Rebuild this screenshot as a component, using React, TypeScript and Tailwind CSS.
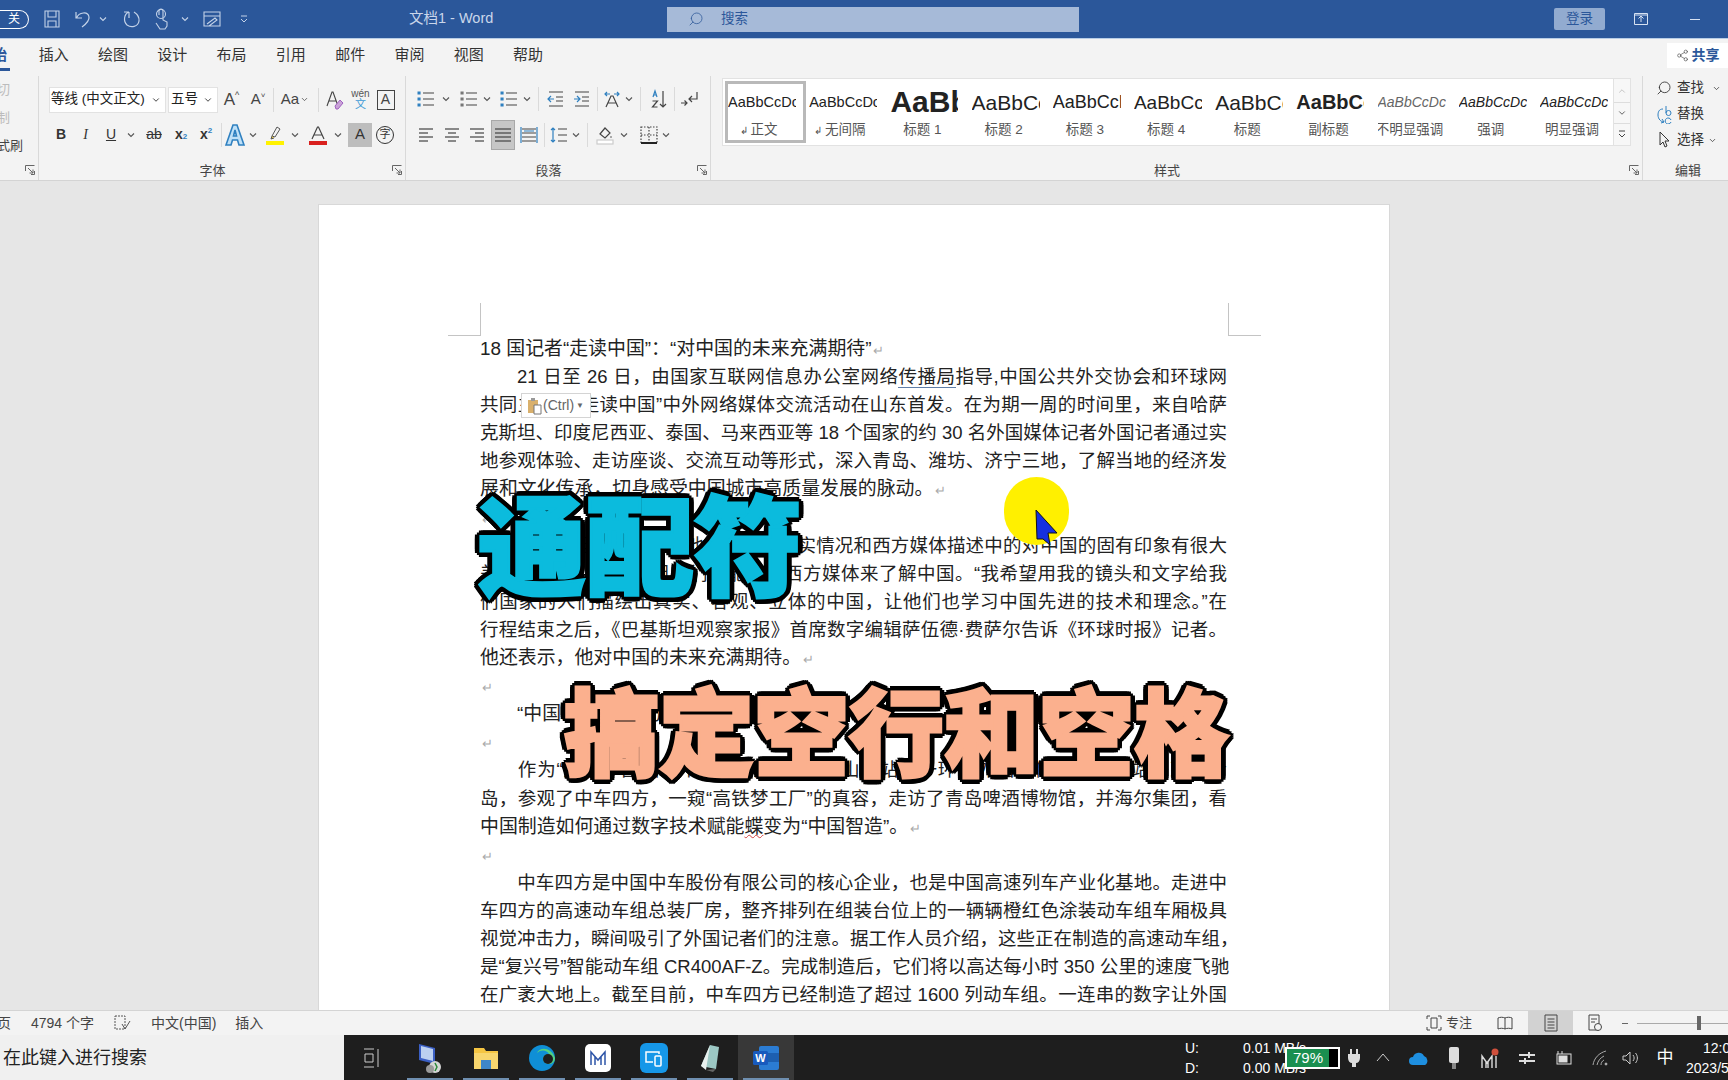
import React from "react";
import { Search, ChevronDown, ChevronUp, Share2 } from "lucide-react";

type P = { c?: string; children?: React.ReactNode };
const Cell = ({ c = "", children }: P) => <div className={`flex items-center justify-center shrink-0 ${c}`}>{children}</div>;
const Sep = ({ c = "" }: P) => <div className={`flex items-center justify-center shrink-0 ${c}`}><div className="w-px h-[24px] bg-[#dadada]" /></div>;
const Chev = ({ c = "" }: P) => <Cell c={c}><svg width="8" height="6" viewBox="0 0 8 6"><path d="M1 1.5 4 4.5 7 1.5" fill="none" stroke="#555" strokeWidth="1.1" /></svg></Cell>;

const S = ({ children, w = 20, h = 20 }: { children: React.ReactNode; w?: number; h?: number }) => (
  <svg width={w} height={h} viewBox="0 0 20 20" fill="none" stroke="#444" strokeWidth="1.2">{children}</svg>
);
const Lines = ({ kind }: { kind: "l" | "c" | "r" | "j" }) => {
  const rows = kind === "j" ? [[2, 18], [2, 18], [2, 18], [2, 18]] : kind === "l" ? [[3, 17], [3, 12], [3, 17], [3, 12]] : kind === "c" ? [[3, 17], [6, 14], [3, 17], [6, 14]] : [[3, 17], [8, 17], [3, 17], [8, 17]];
  return <S>{rows.map((r, i) => <path key={i} d={`M${r[0]} ${4 + i * 4}H${r[1]}`} />)}</S>;
};
const ListI = ({ color = "#2f80c0" }: { color?: string }) => (
  <S><path d="M7 4H18M7 10H18M7 16H18" /><path d="M3 4h.1M3 10h.1M3 16h.1" stroke={color} strokeWidth="3" strokeLinecap="square" /></S>
);
const Launcher = () => (
  <svg width="10" height="10" viewBox="0 0 10 10" fill="none" stroke="#666"><path d="M.5 6V.5H9.5" /><path d="M3 3 8 8M8 4.5V8H4.5" /><path d="M9.5 6V9.5H6" /></svg>
);
const Group = ({ c = "", label, launcher, children }: P & { label: string; launcher?: boolean }) => (
  <div className={`flex flex-col shrink-0 h-full border-r border-[#d9d9d9] ${c}`}>
    <div className="flex-1 min-h-0">{children}</div>
    <div className="h-[22px] flex items-center text-[13px] text-[#444] shrink-0 pt-[3px]">
      <div className="flex-1" /><span className="ml-[-16px]">{label}</span>
      <div className="flex-1 flex justify-end pr-[3px] pb-[2px]">{launcher && <Launcher />}</div>
    </div>
  </div>
);

const Tab = ({ children }: P) => <div className="w-[59.300px] shrink-0 text-center text-[15px] text-[#333]">{children}</div>;

const styles: [string, string, string][] = [
  ["AaBbCcDc", "正文", "text-[14.500px]"],
  ["AaBbCcDc", "无间隔", "text-[14.500px]"],
  ["AaBbCcDc", "标题 1", "text-[30px] font-bold"],
  ["AaBbCcDc", "标题 2", "text-[21px]"],
  ["AaBbCcDc", "标题 3", "text-[18px]"],
  ["AaBbCcDc", "标题 4", "text-[19px]"],
  ["AaBbCcDc", "标题", "text-[21px]"],
  ["AaBbCcDc", "副标题", "text-[20px] font-bold"],
  ["AaBbCcDc", "不明显强调", "text-[14px] italic text-[#666]"],
  ["AaBbCcDc", "强调", "text-[14px] italic"],
  ["AaBbCcDc", "明显强调", "text-[14px] italic text-[#5b8ac0]"],
];

const Mark = () => <span className="text-[#aaa] text-[13px] ml-[2px]">↵</span>;
const J = ({ children }: P) => <div className="h-[28.1px] leading-[28.1px] text-[18.500px] whitespace-nowrap text-justify [text-align-last:justify]">{children}</div>;
const L = ({ children }: P) => <div className="h-[28.1px] leading-[28.1px] text-[18.900px] whitespace-nowrap">{children}</div>;
const Ind = () => <span className="inline-block w-[37px]" />;

const TaskCell = ({ c = "", bar = true, children }: P & { bar?: boolean }) => (
  <div className={`relative w-[56px] h-full flex items-center justify-center shrink-0 ${c}`}>
    {children}
    {bar && <div className="absolute bottom-0 left-[5px] right-[5px] h-[2px] bg-[#6f8fb0]" />}
  </div>
);

const outlineA = "[text-shadow:6px_0_0_#000,-6px_0_0_#000,0_6px_0_#000,0_-6px_0_#000,4px_4px_0_#000,-4px_4px_0_#000,4px_-4px_0_#000,-4px_-4px_0_#000,6px_2px_0_#000,-6px_2px_0_#000,6px_-2px_0_#000,-6px_-2px_0_#000,2px_6px_0_#000,-2px_6px_0_#000,2px_-6px_0_#000,-2px_-6px_0_#000]";

export default function App() {
  return (
    <div className="relative w-[1728px] h-[1080px] overflow-hidden flex flex-col bg-[#e6e6e6] [font-family:'Liberation_Sans','Noto_Sans_CJK_SC',sans-serif]">
      {/* Title bar */}
      <div className="h-[38px] shrink-0 bg-[#2b579a] flex items-center text-[#d7e2f2]">
        <div className="w-[29px] h-[19px] shrink-0 border border-white rounded-r-full flex items-center justify-center text-[12px] text-white border-l-0">关</div>
        <Cell c="w-[28px] ml-[9px]"><svg width="20" height="20" viewBox="0 0 20 20" fill="none" stroke="#c3d2e8" strokeWidth="1.1"><path d="M3 2h14v16H3zM6 2v6h8V2M6 18v-6h8v6" /></svg></Cell>
        <Cell c="w-[30px] ml-[2px]"><svg width="20" height="20" viewBox="0 0 20 20" fill="none" stroke="#c3d2e8" strokeWidth="1.2"><path d="M3 3v6h6M3.5 9C6 3 15 2 16 8c.6 4-3 7-7 10" /></svg></Cell>
        <Chev c="w-[10px] [&_path]:stroke-[#c3d2e8]" />
        <Cell c="w-[30px] ml-[9px]"><svg width="20" height="20" viewBox="0 0 20 20" fill="none" stroke="#c3d2e8" strokeWidth="1.2"><path d="M7 3C2 5 1 12 5 16c4 3 11 2 12-4 .5-4-2-7-5-9M7 3v6M7 3H2" /></svg></Cell>
        <Cell c="w-[20px] ml-[5px]"><svg width="18" height="22" viewBox="0 0 18 22" fill="none" stroke="#c3d2e8" strokeWidth="1.1"><circle cx="8" cy="6" r="4.5" /><path d="M6 7V3a2 2 0 014 0v9l4 2v4l-2 3H7l-4-6" /></svg></Cell>
        <Chev c="w-[10px] ml-[8px] [&_path]:stroke-[#c3d2e8]" />
        <Cell c="w-[24px] ml-[10px]"><svg width="20" height="20" viewBox="0 0 20 20" fill="none" stroke="#c3d2e8" strokeWidth="1.1"><path d="M2 3h16v14H2zM2 7h16M5 15l8-6 2 2-8 6" /></svg></Cell>
        <Cell c="w-[14px] ml-[13px]"><svg width="10" height="8" viewBox="0 0 10 8" fill="none" stroke="#c3d2e8"><path d="M2 1h6M2 4l3 3 3-3" /></svg></Cell>
        <div className="w-[154px] ml-[4px] shrink-0" />
        <div className="w-[95px] text-[14.500px] text-[#c9d6ea] shrink-0 whitespace-nowrap">文档1 - Word</div>
        <div className="w-[163px] shrink-0" />
        <div className="w-[412px] h-[25px] shrink-0 bg-[#a6bad8] flex items-center text-[13.5px] text-[#2b579a]">
          <Search className="ml-[21px] w-[16px] h-[16px] text-[#3a639f] -scale-x-100" strokeWidth={1.3} />
          <span className="ml-[17px]">搜索</span>
        </div>
        <div className="w-[475px] shrink-0" />
        <div className="w-[51px] h-[22px] shrink-0 rounded-[2px] bg-[#92abd0] text-[13.5px] text-[#2b579a] text-center leading-[22px]">登录</div>
        <Cell c="w-[72px]"><svg width="16" height="14" viewBox="0 0 16 14" fill="none" stroke="#d7e2f2"><path d="M1.5 1.5h13v11h-13zM8 10V5M5.5 6.5 8 4l2.5 2.5M1.5 3h13" /></svg></Cell>
        <div className="ml-[13px] w-[10px] h-px bg-[#d7e2f2]" />
      </div>

      {/* Tabs */}
      <div className="h-[38px] shrink-0 bg-[#f3f3f3] border-t border-[#b8cde6] flex items-center relative pb-[4px]">
        <div className="w-[10px] shrink-0 h-full overflow-hidden flex items-center relative">
          <span className="text-[15px] font-bold text-[#2b579a] ml-[-8px]">始</span>
          <div className="absolute bottom-[1px] left-0 right-0 h-[3px] bg-[#2b579a]" />
        </div>
        <div className="w-[14px] shrink-0" />
        {["插入", "绘图", "设计", "布局", "引用", "邮件", "审阅", "视图", "帮助"].map((t) => <Tab key={t}>{t}</Tab>)}
        <div className="flex-1" />
        <div className="w-[61px] h-[25px] bg-white flex items-center justify-center gap-[3px] text-[14px] font-bold text-[#2b579a] shrink-0 overflow-hidden">
          <Share2 className="w-[13px] h-[13px] text-[#555]" strokeWidth={1.3} />
          <span className="whitespace-nowrap">共享</span>
        </div>
      </div>

      {/* Ribbon */}
      <div className="h-[105px] shrink-0 bg-[#f3f3f3] border-b border-[#d4d4d4] flex text-[#333]">
        {/* clipboard */}
        <Group c="w-[39px]" label="" launcher>
          <div className="flex flex-col text-[13px] pt-[4px] gap-[8px] overflow-hidden">
            <div className="h-[20px] ml-[-3px] text-[#bcbcbc]">切</div>
            <div className="h-[20px] ml-[-3px] text-[#bcbcbc]">制</div>
            <div className="h-[20px] ml-[-3px] text-[#444] whitespace-nowrap">式刷</div>
          </div>
        </Group>
        {/* font */}
        <Group c="w-[367px]" label="字体" launcher>
          <div className="pl-[10px] pt-[10px] flex flex-col gap-[8px]">
            <div className="flex items-center h-[27px]">
              <div className="w-[117px] h-[26px] bg-white border border-[#e2e2e2] flex items-center justify-between pl-[1px] pr-[4px] text-[13.5px] text-[#222] shrink-0 whitespace-nowrap"><span>等线 (中文正文)</span><ChevronDown className="w-[10px] h-[10px]" /></div>
              <div className="w-[50px] ml-[2px] h-[26px] bg-white border border-[#e2e2e2] flex items-center justify-between pl-[2px] pr-[4px] text-[13.5px] text-[#222] shrink-0"><span>五号</span><ChevronDown className="w-[10px] h-[10px]" /></div>
              <Cell c="w-[27px] text-[17px] text-[#444]">A<sup className="text-[9px]">^</sup></Cell>
              <Cell c="w-[26px] text-[15px] text-[#444]">A<sup className="text-[8px]">˅</sup></Cell>
              <Sep c="w-[5px]" />
              <Cell c="w-[38px] text-[15px] text-[#444]">Aa<ChevronDown className="w-[9px] h-[9px] ml-[1px]" /></Cell>
              <Sep c="w-[8px]" />
              <Cell c="w-[26px]"><svg width="22" height="22" viewBox="0 0 22 22" fill="none"><path d="M3 17 8 3h1l5 14M5 12h7" stroke="#444" strokeWidth="1.1" /><path d="M11 17l5-6 3 3-5 6h-2z" fill="#c9a3d8" stroke="#a060c0" /></svg></Cell>
              <Cell c="w-[25px] flex-col leading-none"><span className="text-[10px] text-[#555]">wén</span><span className="text-[11px] text-[#3d9ad6]">文</span></Cell>
              <Cell c="w-[25px]"><div className="w-[18px] h-[20px] border border-[#444] flex items-center justify-center text-[14px] text-[#444]">A</div></Cell>
            </div>
            <div className="flex items-center h-[27px] text-[#333]">
              <Cell c="w-[24px] font-bold text-[14px]">B</Cell>
              <Cell c="w-[25px] italic text-[14px] [font-family:'Liberation_Serif',serif]">I</Cell>
              <Cell c="w-[26px] underline text-[14px]">U</Cell>
              <Chev c="w-[14px]" />
              <Cell c="w-[30px] ml-px line-through text-[14px]">ab</Cell>
              <Cell c="w-[24px] font-bold text-[14px]">x<sub className="text-[8px] text-[#2f80c0]">2</sub></Cell>
              <Cell c="w-[26px] font-bold text-[14px]">x<sup className="text-[8px] text-[#2f80c0]">2</sup></Cell>
              <Sep c="w-[4px]" />
              <Cell c="w-[24px]"><svg width="22" height="24" viewBox="0 0 22 24" fill="#bfe0f7" stroke="#2f80c0" strokeWidth="1.600"><path d="M2 22 9 2h4l7 20h-5l-1.500-5h-5L7 22zM9.500 13h3L11 7z" /></svg></Cell>
              <Chev c="w-[12px]" />
              <Cell c="w-[32px]"><svg width="22" height="22" viewBox="0 0 22 22" fill="none"><path d="M13 3l3 2-5 8-3-1z" stroke="#555" /><path d="M8 12l-1 3 3-1" fill="#e8c83a" stroke="#555" /><rect x="2" y="17" width="18" height="4" fill="#fff200" /></svg></Cell>
              <Chev c="w-[8px]" />
              <Cell c="w-[28px] ml-[5px]"><svg width="22" height="22" viewBox="0 0 22 22" fill="none"><path d="M5 15 10.500 3h1L17 15M7 11h8" stroke="#444" strokeWidth="1.2" /><rect x="2" y="17" width="18" height="4" fill="#d9201e" /></svg></Cell>
              <Chev c="w-[12px]" />
              <Cell c="w-[24px] h-[24px] ml-[4px] bg-[#bdbdbd] text-[15px] text-[#333]">A</Cell>
              <Cell c="w-[24px] ml-px"><div className="w-[18px] h-[18px] rounded-full border border-[#333] flex items-center justify-center text-[11px]">字</div></Cell>
            </div>
          </div>
        </Group>
        {/* paragraph */}
        <Group c="w-[305px]" label="段落" launcher>
          <div className="pl-[8px] pt-[9px] flex flex-col gap-[9px]">
            <div className="flex items-center h-[27px]">
              <Cell c="w-[24px]"><ListI /></Cell><Chev c="w-[16px]" />
              <Cell c="w-[24px] ml-[3px]"><ListI color="#777" /></Cell><Chev c="w-[12px]" />
              <Cell c="w-[24px] ml-[4px]"><ListI color="#2f80c0" /></Cell><Chev c="w-[12px]" />
              <Sep c="w-[11px]" />
              <Cell c="w-[24px]"><S><path d="M3 3H17M10 8H17M10 12H17M3 17H17" /><path d="M8 10H2M5 7l-3 3 3 3" stroke="#2f80c0" /></S></Cell>
              <Cell c="w-[24px] ml-[2px]"><S><path d="M3 3H17M10 8H17M10 12H17M3 17H17" /><path d="M2 10H8M5 7l3 3-3 3" stroke="#2f80c0" /></S></Cell>
              <Sep c="w-[6px]" />
              <Cell c="w-[24px]"><S><path d="M4 18 9 7h2l5 11M6 14h8" /><path d="M3 5h5M5 3 3 5l2 2M12 5h5M15 3l2 2-2 2" stroke="#2f80c0" /></S></Cell>
              <Chev c="w-[10px]" />
              <Sep c="w-[13px]" />
              <Cell c="w-[24px] relative"><S><path d="M4 8 6 2l2 6M4.700 6h2.600" stroke="#2f80c0" /><path d="M3.500 12H8.500L3.500 18H8.500" /><path d="M14 2V18M11 15l3 3 3-3" /></S></Cell>
              <Sep c="w-[6px]" />
              <Cell c="w-[24px]"><S><path d="M18 3v7h-8M13 7l-3 3 3 3" /><path d="M2 14H8M5.500 11.500 8 14l-2.500 2.500" /></S></Cell>
            </div>
            <div className="flex items-center h-[27px]">
              <Cell c="w-[24px]"><Lines kind="l" /></Cell>
              <Cell c="w-[24px] ml-[2px]"><Lines kind="c" /></Cell>
              <Cell c="w-[24px] ml-px"><Lines kind="r" /></Cell>
              <Cell c="w-[24px] h-[30px] ml-[2px] bg-[#c6c6c6] border border-[#a8a8a8]"><Lines kind="j" /></Cell>
              <Cell c="w-[24px] ml-[2px]"><S><path d="M3 4H17M3 8H17M3 12H17M3 16H17" /><path d="M2 2v16M18 2v16M5 6h10" stroke="#2f80c0" /></S></Cell>
              <Sep c="w-[6px]" />
              <Cell c="w-[24px]"><S><path d="M9 4H18M9 10H18M9 16H18" /><path d="M4 3v14M2 5l2-2 2 2M2 15l2 2 2-2" stroke="#2f80c0" /></S></Cell>
              <Chev c="w-[10px]" />
              <Sep c="w-[12px]" />
              <Cell c="w-[24px]"><S><path d="M5 9l5-6 5 5-5 5z" /><path d="M16 11v2" stroke="#777" /><rect x="2" y="15" width="16" height="4" stroke="#ccc" fill="#fff" /></S></Cell>
              <Chev c="w-[14px]" />
              <Cell c="w-[24px] ml-[6px]"><S><path d="M2 2H18V18H2zM10 2V18M2 10H18" strokeDasharray="1.500 1.500" /><path d="M2 18H18" strokeWidth="2" stroke="#222" /></S></Cell>
              <Chev c="w-[10px]" />
            </div>
          </div>
        </Group>
        {/* styles */}
        <Group c="w-[932px]" label="样式" launcher>
          <div className="pl-[11px] pt-[2px]">
            <div className="w-[909px] h-[68px] bg-white border border-[#e2e2e2] flex">
              <div className="flex flex-1 min-w-0 pl-[2px] pt-[2px]">
                {styles.map(([a, b, c], i) => (
                  <div key={b} className={`w-[81.200px] h-[62px] shrink-0 flex flex-col items-center overflow-hidden ${i === 0 ? "border-[3px] border-[#b9b9b9]" : "border-[3px] border-transparent"}`}>
                    <div className={`h-[33px] w-[68px] self-start flex items-center justify-start overflow-hidden whitespace-nowrap text-[#222] leading-none pt-[4px] ${c}`}>{a}</div>
                    <div className={`h-[24px] text-[13.500px] text-[#555] whitespace-nowrap leading-[28px] ${i < 2 ? "mr-[14px]" : "mr-[11px]"}`}>
                      {i < 2 && <span className="text-[10px] mr-[3px]">↲</span>}{b}
                    </div>
                  </div>
                ))}
              </div>
              <div className="w-[17px] shrink-0 flex flex-col border-l border-[#e2e2e2]">
                <Cell c="h-[24px] border-b border-[#ddd] bg-[#f7f7f7]"><ChevronUp className="w-[10px] h-[10px] text-[#bbb]" /></Cell>
                <Cell c="h-[21px] border-b border-[#ddd] bg-[#f7f7f7]"><ChevronDown className="w-[10px] h-[10px] text-[#444]" /></Cell>
                <Cell c="flex-1 bg-[#f7f7f7]"><svg width="8" height="9" viewBox="0 0 8 9" fill="none" stroke="#444"><path d="M1 1h6M1 4l3 3 3-3" /></svg></Cell>
              </div>
            </div>
          </div>
        </Group>
        {/* editing */}
        <div className="flex-1 h-full flex flex-col text-[13.5px] text-[#333]">
          <div className="flex-1 mt-[-1px] flex flex-col">
            <div className="h-[26px] pl-[13px] flex items-center gap-[5px]"><Search className="w-[16px] h-[16px] -scale-x-100" strokeWidth={1.3} /><span>查找</span><ChevronDown className="w-[9px] h-[9px] ml-[3px]" /></div>
            <div className="h-[26px] pl-[13px] flex items-center gap-[4px]">
              <svg width="17" height="20" viewBox="0 0 17 20" fill="none" stroke="#2f80c0"><path d="M10 2v7a2.500 2.500 0 105 0 2.500 2.500 0 10-5 0" /><path d="M7 5C3 5 2 8 2 11c0 4 3 7 6 7M6 15l2 3-3 1" /><path d="M15 16a3 3 0 10 0 2" /></svg>
              <span>替换</span>
            </div>
            <div className="h-[26px] pl-[14px] flex items-center gap-[4px]"><svg width="16" height="18" viewBox="0 0 16 18" fill="none" stroke="#333"><path d="M3 1v13l3-3 2 5 2-1-2-5h4z" /></svg><span>选择</span><ChevronDown className="w-[9px] h-[9px]" /></div>
          </div>
          <div className="h-[22px] pl-[5px] text-center text-[13px] text-[#444] pt-[3px]">编辑</div>
        </div>
      </div>

      {/* Canvas */}
      <div className="flex-1 min-h-0 overflow-hidden bg-[#e6e6e6] pl-[318px] pt-[23px]">
        <div className="relative w-[1072px] h-[900px] bg-white border border-[#d8d8d8] text-[#222] pl-[161px] pr-[162px]">
          <div className="h-[98px]" />
          {/* crop marks */}
          <div className="h-[33px] mb-[-1px] flex justify-between ml-[-32px] mr-[-34px]">
            <div className="w-[33px] h-full border-r border-b border-[#c4c4c4]" />
            <div className="w-[33px] h-full border-l border-b border-[#c4c4c4]" />
          </div>
          <L>18 国记者“走读中国”：“对中国的未来充满期待”<Mark /></L>
          <J><Ind />21 日至 26 日，由国家互联网信息办公室网络<span className="border-b border-[#5f7ea8]">传播局</span>指导,中国公共外交协会和环球网</J>
          <J>共同主办的“走读中国”中外网络媒体交流活动在山东首发。在为期一周的时间里，来自哈萨</J>
          <J>克斯坦、印度尼西亚、泰国、马来西亚等 18 个国家的约 30 名外国媒体记者外国记者通过实</J>
          <J>地参观体验、走访座谈、交流互动等形式，深入青岛、潍坊、济宁三地，了解当地的经济发</J>
          <L>展和文化传承，切身感受中国城市高质量发展的脉动。<Mark /></L>
          <L><Mark /></L>
          <J><Ind />巴基斯坦记者表示，他所看到的真实情况和西方媒体描述中的对中国的固有印象有很大</J>
          <J>差距。他说，巴基斯坦人们只能通过西方媒体来了解中国。“我希望用我的镜头和文字给我</J>
          <J>们国家的人们描绘出真实、客观、立体的中国，让他们也学习中国先进的技术和理念。”在</J>
          <J>行程结束之后，《巴基斯坦观察家报》首席数字编辑萨伍德·费萨尔告诉《环球时报》记者。</J>
          <L>他还表示，他对中国的未来充满期待。<Mark /></L>
          <L><Mark /></L>
          <L><Ind />“中国制造”的魅力</L>
          <L><Mark /></L>
          <J><Ind />作为“走读中国”中外网络媒体交流活动山东站的一环，外国媒体记者们首站来到了青</J>
          <J>岛，参观了中车四方，一窥“高铁梦工厂”的真容，走访了青岛啤酒博物馆，并海尔集团，看</J>
          <L>中国制造如何通过数字技术赋能<span className="underline decoration-wavy decoration-[#d04040] decoration-1">蝶</span>变为“中国智造”。<Mark /></L>
          <L><Mark /></L>
          <J><Ind />中车四方是中国中车股份有限公司的核心企业，也是中国高速列车产业化基地。走进中</J>
          <J>车四方的高速动车组总装厂房，整齐排列在组装台位上的一辆辆橙红色涂装动车组车厢极具</J>
          <J>视觉冲击力，瞬间吸引了外国记者们的注意。据工作人员介绍，这些正在制造的高速动车组，</J>
          <J>是“复兴号”智能动车组 CR400AF-Z。完成制造后，它们将以高达每小时 350 公里的速度飞驰</J>
          <J>在广袤大地上。截至目前，中车四方已经制造了超过 1600 列动车组。一连串的数字让外国</J>

          {/* paste options */}
          <div className="absolute left-[202px] top-[188px] w-[70px] h-[25px] bg-white border border-[#d4d4d4] flex items-center pl-[5px] text-[14px] text-[#666]">
            <svg width="16" height="18" viewBox="0 0 16 18"><rect x="1" y="3" width="10" height="13" fill="#d9b06c" /><rect x="4" y="1" width="4" height="3" fill="#999" /><path d="M7 8h7v9H7z" fill="#fff" stroke="#777" /></svg>
            <span>(Ctrl)</span><span className="text-[8px] ml-[2px]">▼</span>
          </div>
        </div>
      </div>

      {/* Status bar */}
      <div className="h-[25px] shrink-0 bg-[#f3f3f3] border-t border-[#d4d4d4] flex items-center text-[14px] text-[#444]">
        <div className="w-[31px] shrink-0 overflow-hidden"><span className="block ml-[-3px]">页</span></div>
        <span className="w-[82px] shrink-0 whitespace-nowrap">4794 个字</span>
        <svg width="18" height="16" viewBox="0 0 18 16" fill="none" stroke="#555"><path d="M2 1h10v13H2z" strokeDasharray="2 1" /><path d="M9 9l3 5 5-8" /></svg>
        <span className="ml-[20px] whitespace-nowrap">中文(中国)</span>
        <span className="ml-[19px]">插入</span>
        <div className="flex-1" />
        <svg width="20" height="18" viewBox="0 0 20 18" fill="none" stroke="#444"><path d="M3 5V2h3M17 5V2h-3M3 13v3h3M17 13v3h-3M7 4h6v10H7z" /></svg>
        <span className="ml-[2px] text-[13px]">专注</span>
        <Cell c="w-[16px] ml-[25px]"><svg width="16" height="16" viewBox="0 0 16 16" fill="none" stroke="#444"><path d="M8 3C6 2 3 2 1 3v11c2-1 5-1 7 0 2-1 5-1 7 0V3c-2-1-5-1-7 0zM8 3v11" /></svg></Cell>
        <Cell c="w-[45px] h-[24px] ml-[15px] bg-[#d2d2d2]"><svg width="14" height="18" viewBox="0 0 14 18" fill="none" stroke="#444"><path d="M1 1h12v16H1zM3.500 5h7M3.500 8h7M3.500 11h7M3.500 14h7" /></svg></Cell>
        <Cell c="w-[16px] ml-[14px]"><svg width="16" height="18" viewBox="0 0 16 18" fill="none" stroke="#444"><path d="M2 1h10v15H2zM4 5h6M4 8h4" /><circle cx="11" cy="13" r="3.500" fill="#f3f3f3" /></svg></Cell>
        <div className="ml-[19px] w-[6px] h-px bg-[#666]" />
        <div className="ml-[9px] w-[91px] h-px bg-[#aaa] flex items-center"><div className="ml-[60px] w-[4px] h-[14px] bg-[#666] shrink-0" /></div>
      </div>

      {/* Taskbar */}
      <div className="h-[45px] shrink-0 bg-[#1e1e1e] flex items-center text-white">
        <div className="w-[344px] h-full shrink-0 bg-[#f0f0f0] flex items-center pl-[3px] pt-[2px] text-[18px] text-[#222]">在此键入进行搜索</div>
        <TaskCell bar={false}><svg width="20" height="24" viewBox="0 0 20 24" fill="none" stroke="#ccc"><path d="M2 3h10M2 21h10M3 8h8v8H3zM16 3v18" /></svg></TaskCell>
        <TaskCell c="ml-[2px]"><svg width="30" height="32" viewBox="0 0 30 32"><path d="M4 2l16 4v16L4 18z" fill="#3b5fc4" /><path d="M6 4l12 3v12L6 16z" fill="#bcd0f0" /><circle cx="20" cy="25" r="6" fill="#d6d6d6" /><circle cx="15" cy="27" r="4" fill="#9a9a9a" /><path d="M20 21l2 4-2 4" stroke="#2a8a3a" strokeWidth="1.500" fill="none" /></svg></TaskCell>
        <TaskCell><svg width="26" height="26" viewBox="0 0 26 26"><path d="M1 3h10l2 3h12v18H1z" fill="#f5c542" /><rect x="1" y="8" width="24" height="16" fill="#f8d66e" /><rect x="8" y="15" width="10" height="9" fill="#3f86c8" /></svg></TaskCell>
        <TaskCell><svg width="28" height="28" viewBox="0 0 28 28"><circle cx="14" cy="14" r="13" fill="#0f8fd6" /><path d="M27 14c0 4-3 6-6 6-4 0-6-3-6-5 0-3 3-5 6-5-2-4-8-5-12-1C11 3 23 2 27 14z" fill="#53d182" /><circle cx="20" cy="15" r="5" fill="#1e1e1e" /></svg></TaskCell>
        <TaskCell><div className="w-[26px] h-[28px] bg-white rounded-[5px] flex items-center justify-center"><svg width="18" height="16" viewBox="0 0 18 16" fill="none" stroke="#2e55a8" strokeWidth="1.500"><path d="M2 15V2l7 8 7-8v13M6 15V6M12 15V6" /></svg></div></TaskCell>
        <TaskCell><div className="w-[28px] h-[30px] bg-[#1697e8] rounded-[6px] flex items-center justify-center"><svg width="20" height="18" viewBox="0 0 20 18" fill="none" stroke="#fff" strokeWidth="1.500"><path d="M15 5V3H2v10h7" /><rect x="11" y="7" width="6" height="10" rx="1" /></svg></div></TaskCell>
        <TaskCell><svg width="24" height="30" viewBox="0 0 24 30"><path d="M12 2l9 2-3 22-15-3z" fill="#9cc8c4" /><path d="M12 2 3 23l5 4z" fill="#e9f0ee" /><path d="M8 27l10-1-3 3z" fill="#666" /></svg></TaskCell>
        <TaskCell c="bg-[#383838]"><svg width="28" height="28" viewBox="0 0 28 28"><rect x="7" y="2" width="20" height="24" rx="2" fill="#2b7cd3" /><rect x="7" y="9" width="20" height="9" fill="#1d5fb0" /><rect x="1" y="7" width="15" height="14" rx="1.500" fill="#185abd" /><text x="8.500" y="18" textAnchor="middle" fontSize="11" fill="#fff" fontWeight="bold">W</text></svg></TaskCell>
        <div className="flex-1" />
        <div className="relative w-[543px] h-full shrink-0 flex items-center overflow-hidden text-[14px]">
          <div className="w-[58px] shrink-0 flex flex-col leading-[20px]"><span>U:</span><span>D:</span></div>
          <div className="w-[97px] shrink-0 flex flex-col leading-[20px] whitespace-nowrap"><span>0.01 MB/s</span><span>0.00 MB/s</span></div>
          <div className="absolute left-[100px] top-[12px] w-[55px] h-[22px] border-[2px] border-white bg-black flex">
            <div className="w-[42px] bg-[#1a8f50] text-[15px] text-center leading-[18px] text-white">79%</div>
          </div>
          <Cell c="w-[28px]"><svg width="12" height="20" viewBox="0 0 12 20" fill="#ddd"><path d="M2 1h2v5H2zM8 1h2v5H8zM0 6h12v4c0 3-2 5-4 5v4H4v-4c-2 0-4-2-4-5z" /></svg></Cell>
          <Cell c="w-[30px]"><svg width="14" height="9" viewBox="0 0 14 9" fill="none" stroke="#ccc"><path d="M1 8l6-7 6 7" /></svg></Cell>
          <Cell c="w-[30px] ml-[6px]"><svg width="22" height="14" viewBox="0 0 22 14" fill="#1e8fe0"><path d="M5 14a4 4 0 010-8 6 6 0 0111-1 5 5 0 011 9z" /></svg></Cell>
          <Cell c="w-[30px] ml-[5px]"><svg width="12" height="24" viewBox="0 0 12 24"><rect x="1" y="1" width="10" height="16" rx="2" fill="#ddd" /><rect x="4" y="17" width="4" height="6" fill="#888" /></svg></Cell>
          <Cell c="w-[30px] ml-[6px] relative"><svg width="20" height="22" viewBox="0 0 20 22" fill="none" stroke="#ddd" strokeWidth="1.400"><path d="M2 21V9l5 7 5-7v12M6 21v-6M8 21v-6M16 21V9" /><circle cx="15" cy="5" r="3.500" fill="#d0503c" stroke="none" /></svg></Cell>
          <Cell c="w-[30px] ml-[7px]"><svg width="18" height="18" viewBox="0 0 18 18" fill="none" stroke="#ddd" strokeWidth="2"><path d="M1 6H17M1 12H17" /><path d="M11 3v6M7 9v6" /></svg></Cell>
          <Cell c="w-[30px] ml-[6px]"><svg width="18" height="18" viewBox="0 0 18 18" fill="none" stroke="#ddd"><rect x="3" y="5" width="14" height="10" /><rect x="5" y="7" width="8" height="6" fill="#ddd" /><path d="M4 2v3M8 2v3" /></svg></Cell>
          <Cell c="w-[30px] ml-[7px]"><svg width="18" height="18" viewBox="0 0 18 18" fill="none" stroke="#aaa"><path d="M2 16C3 9 8 4 15 2M6 16c1-4 3-7 7-9M10 16c0-2 1-4 3-5" /><circle cx="15" cy="15" r="1" fill="#ddd" /></svg></Cell>
          <Cell c="w-[30px]"><svg width="18" height="18" viewBox="0 0 18 18" fill="none" stroke="#ccc"><path d="M2 7h3l4-4v12l-4-4H2zM12 6c1.500 2 1.500 4 0 6M14.500 4c2.500 3 2.500 7 0 10" /></svg></Cell>
          <Cell c="w-[30px] ml-[5px] text-[17px]">中</Cell>
          <div className="flex-1 flex flex-col pl-[6px] leading-[20px] whitespace-nowrap overflow-hidden">
            <span className="ml-[17px]">12:04</span><span>2023/5/29</span>
          </div>
        </div>
      </div>

      {/* Overlays */}
      <div className="absolute left-[1004px] top-[477px] w-[65px] h-[68px] rounded-full bg-[#fff000]" />
      <svg className="absolute left-[1035px] top-[509px]" width="24" height="38" viewBox="0 0 24 38"><path d="M1 1 22 24H13L15 36 8 30 2 30z" fill="#1530e0" stroke="#111" strokeWidth="1" /></svg>
      <div className={`absolute left-[478px] top-[486px] text-[108px] leading-none font-black text-[#0bbbdd] whitespace-nowrap [-webkit-text-stroke:3px_#0bbbdd] [font-family:'Noto_Sans_CJK_SC',sans-serif] ${outlineA}`}>通配符</div>
      <div className={`absolute left-[564px] top-[680px] text-[95px] leading-none font-black text-[#fbb08e] whitespace-nowrap [-webkit-text-stroke:3px_#fbb08e] [font-family:'Noto_Sans_CJK_SC',sans-serif] ${outlineA}`}>搞定空行和空格</div>
    </div>
  );
}
